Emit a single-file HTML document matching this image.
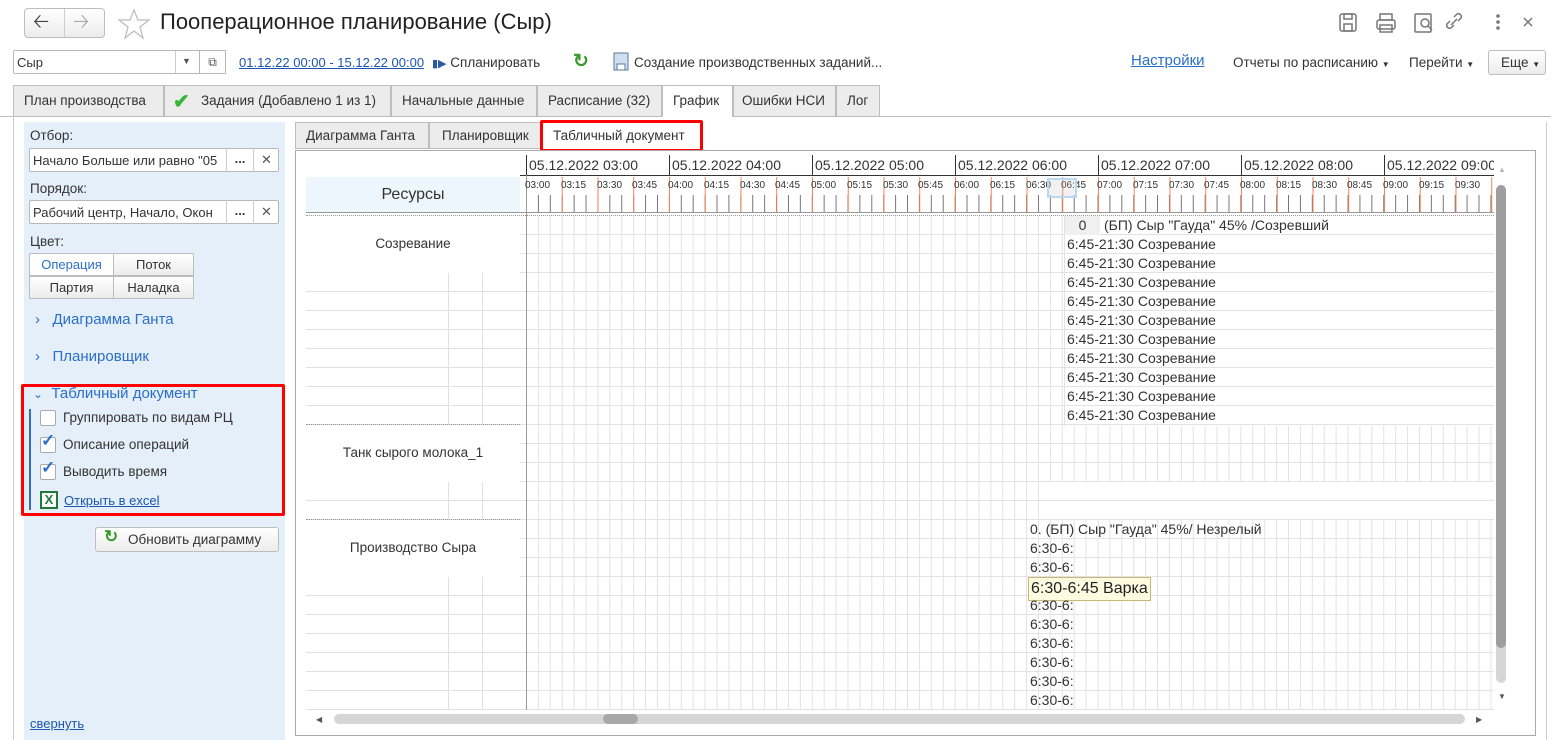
<!DOCTYPE html>
<html><head><meta charset="utf-8">
<style>
*{box-sizing:border-box;margin:0;padding:0}
body{width:1551px;height:740px;overflow:hidden;background:#fff;font-family:"Liberation Sans",Arial,sans-serif;font-size:13px;color:#333;position:relative}
.a{position:absolute}
.btn{position:absolute;border:1px solid #bdbdbd;border-radius:3px;background:linear-gradient(#fff,#ececec);white-space:nowrap}
.tab{position:absolute;top:85px;height:31px;border:1px solid #bdbdbd;border-bottom:none;background:#ececec;font-size:13.5px;line-height:30px;padding:0 10px;color:#333;white-space:nowrap;overflow:hidden}
.lnk{color:#1b57b1;text-decoration:underline}
.inp{position:absolute;border:1px solid #b8b8b8;border-radius:2px;background:#fff;height:25px;font-size:13px;line-height:23px;padding-left:3px;overflow:hidden;white-space:nowrap}
.cb{position:absolute;width:16px;height:16px;border:1px solid #aaa;border-radius:2px;background:#fff}
.tl{position:absolute;top:180px;font-size:10px;color:#333}
.dl{position:absolute;top:156px;font-size:14px;color:#333;border-left:1px solid #333;height:20px;padding-left:2px;line-height:20px;white-space:nowrap}
.r{position:absolute;font-size:14px;color:#333;white-space:nowrap;line-height:19px}
</style></head><body>
<!-- nav -->
<div class="btn" style="left:24px;top:8px;width:81px;height:30px;border-radius:4px"></div>
<div class="a" style="left:64px;top:9px;width:1px;height:28px;background:#ccc"></div>
<div class="a" style="left:33px;top:7px;font-size:20px;color:#444">&#129120;</div>
<div class="a" style="left:73px;top:7px;font-size:20px;color:#aaa">&#129122;</div>
<svg class="a" style="left:118px;top:8px" width="32" height="32" viewBox="0 0 32 32"><polygon points="16,2 20,12 31,12 22,19 25,30 16,23 7,30 10,19 1,12 12,12" fill="none" stroke="#bbb" stroke-width="1.2"/></svg>
<div class="a" style="left:160px;top:9px;font-size:22px;color:#222">Пооперационное планирование (Сыр)</div>
<!-- top right icons -->
<svg class="a" style="left:1338px;top:12px" width="200" height="22" viewBox="0 0 200 22">
<g fill="none" stroke="#777" stroke-width="1.5">
<rect x="2" y="2" width="16" height="17" rx="2"/><rect x="6" y="2" width="8" height="5"/><rect x="6" y="12" width="8" height="7"/>
<rect x="39" y="8" width="18" height="9" rx="2"/><rect x="42" y="2" width="12" height="6"/><rect x="42" y="13" width="12" height="7"/>
<rect x="77" y="2" width="16" height="18" rx="1"/><circle cx="87" cy="11" r="4"/><line x1="90" y1="14" x2="94" y2="18"/>
<path d="M116 13 l-3 3 a3 3 0 0 1 -4 -4 l3 -3 M120 9 l3 -3 a3 3 0 0 0 -4 -4 l-3 3 M113 13 l6 -6"/>
</g>
<circle cx="160" cy="4" r="1.8" fill="#777"/><circle cx="160" cy="10" r="1.8" fill="#777"/><circle cx="160" cy="16" r="1.8" fill="#777"/>
<path d="M186 6 l8 8 M194 6 l-8 8" stroke="#777" stroke-width="1.5"/>
</svg>
<!-- toolbar -->
<div class="inp" style="left:13px;top:50px;width:213px;height:24px">Сыр</div>
<div class="a" style="left:175px;top:51px;width:1px;height:22px;background:#ccc"></div>
<div class="a" style="left:182px;top:56px;font-size:9px;color:#555">▼</div>
<div class="a" style="left:199px;top:50px;width:27px;height:24px;border:1px solid #b8b8b8;background:#fff;font-size:12px;text-align:center;line-height:22px;color:#555">⧉</div>
<div class="a lnk" style="left:239px;top:55px;font-size:13px">01.12.22 00:00 - 15.12.22 00:00</div>
<div class="a" style="left:432px;top:55px;font-size:13.5px;color:#333;white-space:nowrap"><span style="color:#2a5aa0;font-size:11px">▮▶</span> Спланировать</div>
<div class="a" style="left:573px;top:50px;font-size:19px;color:#3a9c2e;font-weight:bold">↻</div>
<svg class="a" style="left:613px;top:52px" width="16" height="19"><rect x="1" y="1" width="14" height="17" fill="#cfdff0" stroke="#5a7aa0"/><rect x="4" y="12" width="8" height="6" fill="#fff" stroke="#5a7aa0"/></svg>
<div class="a" style="left:634px;top:55px;font-size:13.5px;white-space:nowrap">Создание производственных заданий...</div>
<div class="a lnk" style="left:1131px;top:52px;font-size:15px;color:#2a6fc9">Настройки</div>
<div class="a" style="left:1233px;top:55px;font-size:13.5px;white-space:nowrap">Отчеты по расписанию <span style="font-size:8px">▼</span></div>
<div class="a" style="left:1409px;top:55px;font-size:13.5px;white-space:nowrap">Перейти <span style="font-size:8px">▼</span></div>
<div class="btn" style="left:1488px;top:50px;width:58px;height:25px;font-size:13.5px;line-height:23px;padding-left:12px">Еще <span style="font-size:8px">▼</span></div>
<!-- tabs -->
<div class="a" style="left:0;top:116px;width:1551px;height:1px;background:#bdbdbd"></div>
<div class="tab" style="left:13px;width:151px">План производства</div>
<div class="tab" style="left:164px;width:227px;padding-left:36px">Задания (Добавлено 1 из 1)</div>
<div class="a" style="left:173px;top:89px;font-size:20px;color:#3ab53a;font-weight:bold">✔</div>
<div class="tab" style="left:391px;width:146px">Начальные данные</div>
<div class="tab" style="left:537px;width:125px">Расписание (32)</div>
<div class="tab" style="left:662px;width:71px;background:#fff;height:32px">График</div>
<div class="tab" style="left:733px;width:103px;padding:0 8px">Ошибки НСИ</div>
<div class="tab" style="left:836px;width:44px">Лог</div>
<!-- left panel -->
<div class="a" style="left:13px;top:116px;width:1px;height:624px;background:#ccc"></div>
<div class="a" style="left:24px;top:122px;width:261px;height:618px;background:#e5eff9"></div>
<div class="a" style="left:30px;top:128px;font-size:13.5px">Отбор:</div>
<div class="inp" style="left:29px;top:148px;width:250px;height:24px">Начало Больше или равно "05</div>
<div class="a" style="left:226px;top:148px;width:27px;height:24px;border-left:1px solid #ccc;text-align:center;font-weight:bold;line-height:22px">...</div>
<div class="a" style="left:253px;top:148px;width:26px;height:24px;border-left:1px solid #ccc;text-align:center;line-height:24px;color:#555">✕</div>
<div class="a" style="left:30px;top:181px;font-size:13.5px">Порядок:</div>
<div class="inp" style="left:29px;top:200px;width:250px;height:24px">Рабочий центр, Начало, Окон</div>
<div class="a" style="left:226px;top:200px;width:27px;height:24px;border-left:1px solid #ccc;text-align:center;font-weight:bold;line-height:22px">...</div>
<div class="a" style="left:253px;top:200px;width:26px;height:24px;border-left:1px solid #ccc;text-align:center;line-height:24px;color:#555">✕</div>
<div class="a" style="left:30px;top:234px;font-size:13.5px">Цвет:</div>
<div class="btn" style="left:29px;top:253px;width:85px;height:23px;background:#fff;border-radius:2px 0 0 0;text-align:center;line-height:21px;color:#2a6fc9">Операция</div>
<div class="btn" style="left:113px;top:253px;width:81px;height:23px;border-radius:0 2px 0 0;text-align:center;line-height:21px">Поток</div>
<div class="btn" style="left:29px;top:276px;width:85px;height:23px;border-radius:0;text-align:center;line-height:21px">Партия</div>
<div class="btn" style="left:113px;top:276px;width:81px;height:23px;border-radius:0;text-align:center;line-height:21px">Наладка</div>
<div class="a" style="left:35px;top:311px;font-size:15px;color:#2a6fc9">›&nbsp;&nbsp; Диаграмма Ганта</div>
<div class="a" style="left:35px;top:348px;font-size:15px;color:#2a6fc9">›&nbsp;&nbsp; Планировщик</div>
<div class="a" style="left:21px;top:384px;width:264px;height:132px;border:3px solid #f00;border-radius:2px"></div>
<div class="a" style="left:33px;top:385px;font-size:15px;color:#2a6fc9"><span style="font-size:12px">⌄</span>&nbsp; Табличный документ</div>
<div class="a" style="left:29px;top:409px;width:2px;height:101px;background:#3a6fb5"></div>
<div class="cb" style="left:40px;top:410px"></div>
<div class="a" style="left:63px;top:410px;font-size:13.5px">Группировать по видам РЦ</div>
<div class="cb" style="left:40px;top:437px"></div><div class="a" style="left:41px;top:431px;font-size:17px;color:#2a6fc9;font-weight:bold">✓</div>
<div class="a" style="left:63px;top:437px;font-size:13.5px">Описание операций</div>
<div class="cb" style="left:40px;top:464px"></div><div class="a" style="left:41px;top:458px;font-size:17px;color:#2a6fc9;font-weight:bold">✓</div>
<div class="a" style="left:63px;top:464px;font-size:13.5px">Выводить время</div>
<div class="a" style="left:40px;top:491px;width:18px;height:18px;border:2px solid #1d7a3a;background:#fff;color:#1d7a3a;font-weight:bold;font-size:13px;text-align:center;line-height:14px">X</div>
<div class="a lnk" style="left:64px;top:493px;font-size:13px">Открыть в excel</div>
<div class="btn" style="left:95px;top:527px;width:184px;height:25px;font-size:13.5px;line-height:23px;padding-left:32px">Обновить диаграмму</div>
<div class="a" style="left:104px;top:527px;font-size:17px;color:#3a9c2e;font-weight:bold">↻</div>
<div class="a lnk" style="left:30px;top:716px;font-size:13px">свернуть</div>
<!-- subtabs -->
<div class="a" style="left:295px;top:122px;width:134px;height:27px;border:1px solid #bdbdbd;background:#ececec;font-size:13.5px;line-height:26px;padding-left:10px;white-space:nowrap">Диаграмма Ганта</div>
<div class="a" style="left:429px;top:122px;width:112px;height:27px;border:1px solid #bdbdbd;background:#ececec;font-size:13.5px;line-height:26px;padding-left:12px;white-space:nowrap">Планировщик</div>
<div class="a" style="left:540px;top:120px;width:163px;height:32px;border:3px solid #f00;border-radius:2px;background:#fff;font-size:13.5px;line-height:26px;padding-left:10px;white-space:nowrap">Табличный документ</div>
<!-- chart panel -->
<div class="a" style="left:295px;top:150px;width:1241px;height:586px;border:1px solid #aaa;background:#fff"></div>
<div class="a" style="left:1546px;top:122px;width:1px;height:618px;background:#ccc"></div>
<!-- resource column -->
<div class="a" style="left:306px;top:177px;width:214px;height:35px;background:#eef6fd;font-size:16px;text-align:center;line-height:35px">Ресурсы</div>
<div class="a" style="left:306px;top:212px;width:1188px;height:1px;background:#999"></div>
<div class="a" style="left:306px;top:215px;width:1188px;height:1px;border-top:1px dotted #999"></div>
<div class="a" style="left:306px;top:216px;width:214px;height:494px;background-image:linear-gradient(#e0e0e0 1px,transparent 1px);background-size:100% 19px;background-position:0 18px"></div>
<div class="a" style="left:306px;top:216px;width:214px;height:57px;background:#fff"></div>
<div class="a" style="left:448px;top:273px;width:1px;height:152px;background:#e0e0e0"></div>
<div class="a" style="left:482px;top:273px;width:1px;height:152px;background:#e0e0e0"></div>
<div class="a" style="left:306px;top:424px;width:214px;height:1px;border-top:1px dotted #999"></div>
<div class="a" style="left:306px;top:425px;width:214px;height:57px;background:#fff"></div>
<div class="a" style="left:448px;top:482px;width:1px;height:38px;background:#e0e0e0"></div>
<div class="a" style="left:482px;top:482px;width:1px;height:38px;background:#e0e0e0"></div>
<div class="a" style="left:306px;top:519px;width:214px;height:1px;border-top:1px dotted #999"></div>
<div class="a" style="left:306px;top:520px;width:214px;height:57px;background:#fff"></div>
<div class="a" style="left:448px;top:577px;width:1px;height:133px;background:#e0e0e0"></div>
<div class="a" style="left:482px;top:577px;width:1px;height:133px;background:#e0e0e0"></div>
<div class="a" style="left:306px;top:236px;width:214px;text-align:center;font-size:13.5px">Созревание</div>
<div class="a" style="left:306px;top:445px;width:214px;text-align:center;font-size:13.5px">Танк сырого молока_1</div>
<div class="a" style="left:306px;top:540px;width:214px;text-align:center;font-size:13.5px">Производство Сыра</div>
<!-- chart grid -->
<div class="a" style="left:520px;top:155px;width:974px;height:555px;overflow:hidden">
 <div class="a" style="left:0;top:61px;width:974px;height:494px;background-image:linear-gradient(to right,#e2e2e2 1px,transparent 1px),linear-gradient(#e2e2e2 1px,transparent 1px);background-size:11.92px 19px,100% 19px;background-position:6px 0,0 18px"></div>
 <div class="a" style="left:520px;top:327px;width:454px;height:38px;background-image:linear-gradient(#e2e2e2 1px,transparent 1px);background-size:100% 19px;background-position:0 18px;background-color:#fff"></div>
 <div class="a" style="left:0;top:0;width:974px;height:57px;background:#fff"></div>
 <div class="a" style="left:0;top:40px;width:974px;height:17px;background-image:linear-gradient(to right,#777 1px,transparent 1px);background-size:11.92px 100%;background-position:6px 0"></div>
 <div class="a" style="left:0;top:22px;width:974px;height:35px;background-image:linear-gradient(to right,#f4845a 1px,transparent 1px);background-size:35.75px 100%;background-position:6px 0"></div>
 <div class="a" style="left:0;top:20px;width:974px;height:1px;background:#333"></div>
 <div class="a" style="left:0;top:57px;width:974px;height:1px;background:#999"></div>
 <div class="a" style="left:6px;top:0;width:1px;height:555px;background:#999"></div>
</div>
<div class="a" style="left:520px;top:155px;width:974px;height:60px;overflow:hidden">
 <div class="dl" style="left:6px;top:0">05.12.2022 03:00</div>
 <div class="dl" style="left:149px;top:0">05.12.2022 04:00</div>
 <div class="dl" style="left:292px;top:0">05.12.2022 05:00</div>
 <div class="dl" style="left:435px;top:0">05.12.2022 06:00</div>
 <div class="dl" style="left:578px;top:0">05.12.2022 07:00</div>
 <div class="dl" style="left:721px;top:0">05.12.2022 08:00</div>
 <div class="dl" style="left:864px;top:0">05.12.2022 09:00</div>
 <div class="a" style="left:0;top:25px;width:974px;height:20px;font-size:10px;white-space:nowrap">
  <span class="tl" style="left:5px;top:0">03:00</span><span class="tl" style="left:41px;top:0">03:15</span><span class="tl" style="left:77px;top:0">03:30</span><span class="tl" style="left:112px;top:0">03:45</span><span class="tl" style="left:148px;top:0">04:00</span><span class="tl" style="left:184px;top:0">04:15</span><span class="tl" style="left:220px;top:0">04:30</span><span class="tl" style="left:255px;top:0">04:45</span><span class="tl" style="left:291px;top:0">05:00</span><span class="tl" style="left:327px;top:0">05:15</span><span class="tl" style="left:363px;top:0">05:30</span><span class="tl" style="left:398px;top:0">05:45</span><span class="tl" style="left:434px;top:0">06:00</span><span class="tl" style="left:470px;top:0">06:15</span><span class="tl" style="left:506px;top:0">06:30</span><span class="tl" style="left:541px;top:0">06:45</span><span class="tl" style="left:577px;top:0">07:00</span><span class="tl" style="left:613px;top:0">07:15</span><span class="tl" style="left:649px;top:0">07:30</span><span class="tl" style="left:684px;top:0">07:45</span><span class="tl" style="left:720px;top:0">08:00</span><span class="tl" style="left:756px;top:0">08:15</span><span class="tl" style="left:792px;top:0">08:30</span><span class="tl" style="left:827px;top:0">08:45</span><span class="tl" style="left:863px;top:0">09:00</span><span class="tl" style="left:899px;top:0">09:15</span><span class="tl" style="left:935px;top:0">09:30</span>
 </div>
</div>
<div class="a" style="left:1047px;top:178px;width:30px;height:20px;border:2px solid #b8d8f4;background:rgba(200,200,200,.25)"></div>
<!-- texts Созревание -->
<div class="a" style="left:1064px;top:216px;width:430px;height:210px;background-image:linear-gradient(#e2e2e2 1px,transparent 1px);background-size:100% 19px;background-position:0 18px;background-color:#fff;border-left:1px solid #e2e2e2"></div>
<div class="r" style="left:1065px;top:216px;width:35px;height:19px;background:#f0f0f0;text-align:center">0</div>
<div class="r" style="left:1104px;top:216px">(БП) Сыр "Гауда" 45% /Созревший</div>
<div class="r" style="left:1067px;top:235px">6:45-21:30 Созревание</div>
<div class="r" style="left:1067px;top:254px">6:45-21:30 Созревание</div>
<div class="r" style="left:1067px;top:273px">6:45-21:30 Созревание</div>
<div class="r" style="left:1067px;top:292px">6:45-21:30 Созревание</div>
<div class="r" style="left:1067px;top:311px">6:45-21:30 Созревание</div>
<div class="r" style="left:1067px;top:330px">6:45-21:30 Созревание</div>
<div class="r" style="left:1067px;top:349px">6:45-21:30 Созревание</div>
<div class="r" style="left:1067px;top:368px">6:45-21:30 Созревание</div>
<div class="r" style="left:1067px;top:387px">6:45-21:30 Созревание</div>
<div class="r" style="left:1067px;top:406px">6:45-21:30 Созревание</div>
<!-- Производство -->
<div class="r" style="left:1030px;top:520px">0. (БП) Сыр "Гауда" 45%/ Незрелый</div>
<div class="r" style="left:1030px;top:539px">6:30-6:</div>
<div class="r" style="left:1030px;top:558px">6:30-6:</div>
<div class="a" style="left:1028px;top:577px;width:123px;height:24px;background:#fffbe0;border:1px solid #c8b878;font-size:16px;line-height:22px;padding-left:2px;color:#222;white-space:nowrap">6:30-6:45 Варка</div>
<div class="r" style="left:1030px;top:596px">6:30-6:</div>
<div class="r" style="left:1030px;top:615px">6:30-6:</div>
<div class="r" style="left:1030px;top:634px">6:30-6:</div>
<div class="r" style="left:1030px;top:653px">6:30-6:</div>
<div class="r" style="left:1030px;top:672px">6:30-6:</div>
<div class="r" style="left:1030px;top:691px">6:30-6:</div>
<!-- scrollbars -->
<div class="a" style="left:1498px;top:165px;font-size:8px;color:#bbb">▲</div>
<div class="a" style="left:1496px;top:185px;width:10px;height:498px;border-radius:5px;background:#d6d6d6"></div>
<div class="a" style="left:1496px;top:185px;width:10px;height:463px;border-radius:5px;background:#9e9e9e"></div>
<div class="a" style="left:1498px;top:692px;font-size:8px;color:#555">▼</div>
<div class="a" style="left:316px;top:715px;font-size:8px;color:#555">◀</div>
<div class="a" style="left:334px;top:714px;width:1131px;height:10px;border-radius:5px;background:#d6d6d6"></div>
<div class="a" style="left:603px;top:714px;width:35px;height:10px;border-radius:5px;background:#a8a8a8"></div>
<div class="a" style="left:1476px;top:715px;font-size:8px;color:#555">▶</div>
</body></html>
